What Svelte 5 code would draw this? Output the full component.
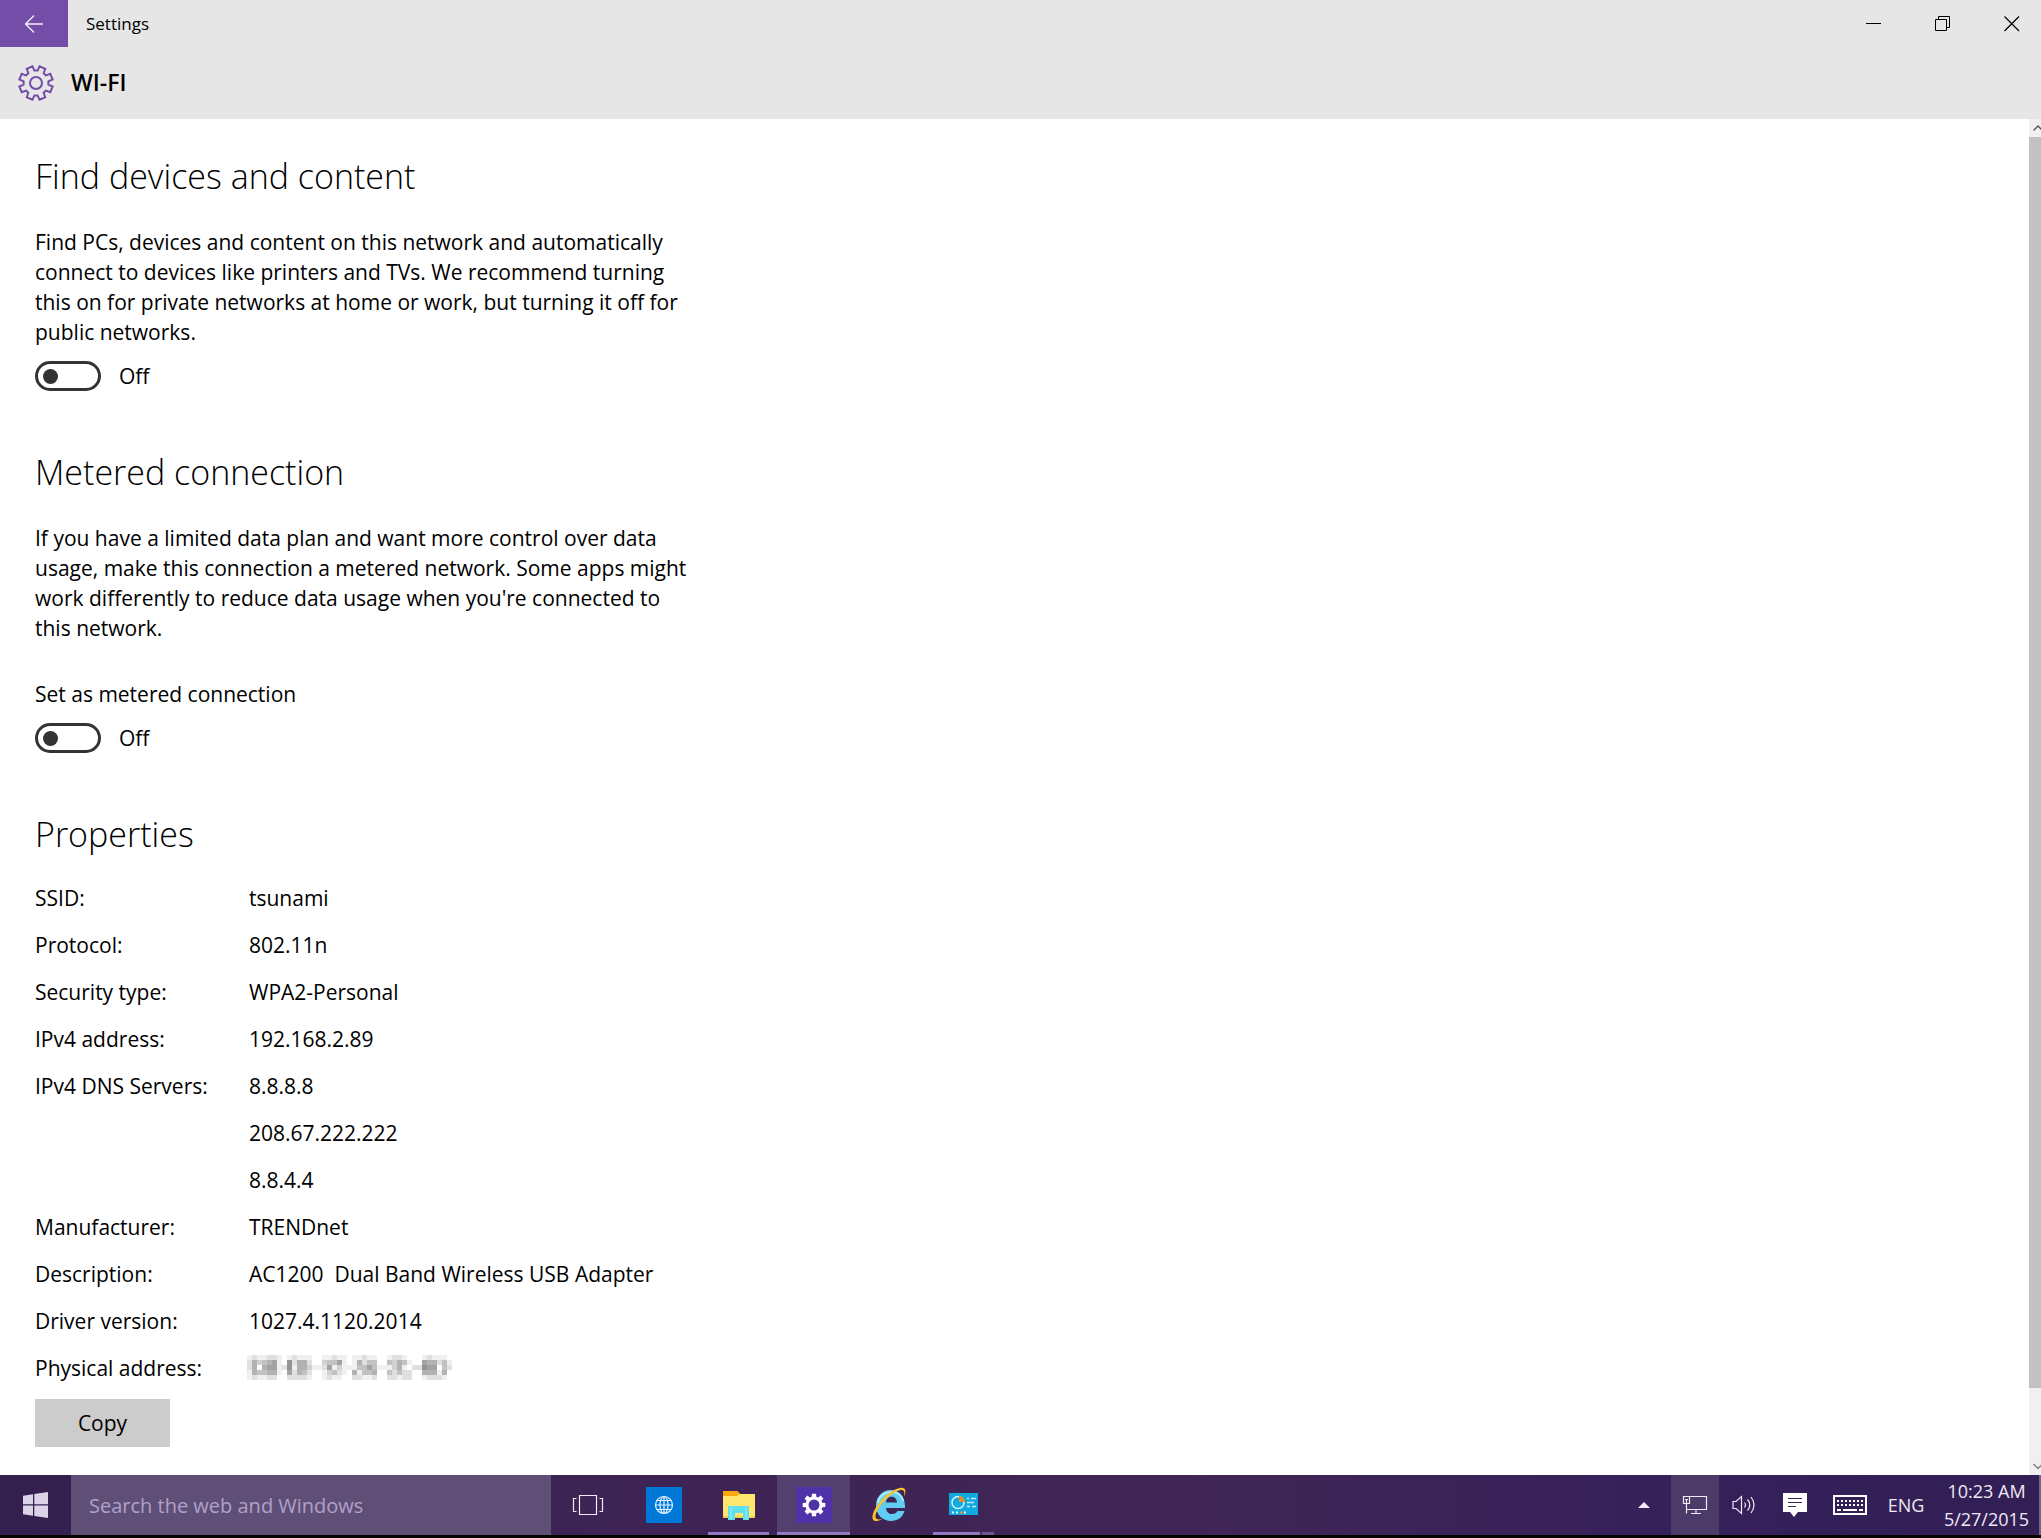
<script>
  let discoverable = $state(false);
  let metered = $state(false);
  let query = $state('');

  const properties = [
    ['SSID:', 'tsunami'],
    ['Protocol:', '802.11n'],
    ['Security type:', 'WPA2-Personal'],
    ['IPv4 address:', '192.168.2.89'],
    ['IPv4 DNS Servers:', '8.8.8.8'],
    ['', '208.67.222.222'],
    ['', '8.8.4.4'],
    ['Manufacturer:', 'TRENDnet'],
    ['Description:', 'AC1200\u00a0 Dual Band Wireless USB Adapter'],
    ['Driver version:', '1027.4.1120.2014']
  ];

  // Pixelated physical address: one digit per cell, 0 = clear, 9 = darkest.
  const mosaic = [
    '12112210121110011211011211001221000121110',
    '25345610725520034461015244004354100655241',
    '25056612715531126131114464111351022766042',
    '15445510625420013421051445004242200555150',
    '12112200222210012110022112002212200122210'
  ];
  const cells = mosaic.flatMap((row, y) =>
    [...row].map((v, x) => ({ x, y, v: Number(v) }))
  ).filter((c) => c.v > 0);

  function gear(cx, cy, outer, inner, teeth, start) {
    const step = (Math.PI * 2) / teeth;
    const pts = [];
    for (let i = 0; i < teeth; i++) {
      const a = start + i * step;
      for (const [r, o] of [[inner, -0.34], [outer, -0.23], [outer, 0.23], [inner, 0.34]]) {
        pts.push(`${(cx + r * Math.cos(a + o * step)).toFixed(2)} ${(cy + r * Math.sin(a + o * step)).toFixed(2)}`);
      }
    }
    return `M${pts.join('L')}Z`;
  }
  const headerGear = gear(18, 18, 17, 12.5, 8, Math.PI / 8);
  const tileGear = gear(18, 18, 11.5, 8.6, 8, 0);
</script>

<div class="window">
  <header>
    <div class="titlebar">
      <button class="back" aria-label="Back">
        <svg width="20" height="20" viewBox="0 0 20 20"><path d="M19 10H1.500M10 1.500L1.500 10L10 18.500" fill="none" stroke="#f4eefb" stroke-width="1.300" /></svg>
      </button>
      <span class="app-name">Settings</span>
      <div class="controls">
        <button aria-label="Minimize">
          <svg width="16" height="16" viewBox="0 0 16 16"><path d="M0 7.500H15" stroke="#000" /></svg>
        </button>
        <button aria-label="Restore">
          <svg width="16" height="16" viewBox="0 0 16 16"><path d="M.5 3.500H11.500V14.500H.5ZM3.500 3.500V.5H14.500V11.500H11.500" fill="none" stroke="#000" /></svg>
        </button>
        <button aria-label="Close">
          <svg width="16" height="16" viewBox="0 0 16 16"><path d="M.5.5L15 15M15 .5L.5 15" stroke="#000" stroke-width="1.200" /></svg>
        </button>
      </div>
    </div>
    <div class="page-title">
      <svg width="36" height="36" viewBox="0 0 36 36" fill="none" stroke="#744da9" stroke-width="2">
        <path d={headerGear} />
        <circle cx="18" cy="18" r="6" />
      </svg>
      <h1>WI-FI</h1>
    </div>
  </header>

  <div class="body">
    <main>
      <section>
        <h2>Find devices and content</h2>
        <p>
          Find PCs, devices and content on this network and automatically<br />
          connect to devices like printers and TVs. We recommend turning<br />
          this on for private networks at home or work, but turning it off for<br />
          public networks.
        </p>
        <label class="toggle">
          <input type="checkbox" role="switch" aria-label="Find devices and content" bind:checked={discoverable} />
          <span>{discoverable ? 'On' : 'Off'}</span>
        </label>
      </section>

      <section>
        <h2>Metered connection</h2>
        <p>
          If you have a limited data plan and want more control over data<br />
          usage, make this connection a metered network. Some apps might<br />
          work differently to reduce data usage when you're connected to<br />
          this network.
        </p>
        <label class="caption" for="metered">Set as metered connection</label>
        <div class="toggle">
          <input id="metered" type="checkbox" role="switch" bind:checked={metered} />
          <span>{metered ? 'On' : 'Off'}</span>
        </div>
      </section>

      <section>
        <h2>Properties</h2>
        <table>
          <tbody>
            {#each properties as [name, value]}
              <tr><th scope="row">{name}</th><td>{value}</td></tr>
            {/each}
            <tr>
              <th scope="row">Physical address:</th>
              <td>
                <svg class="mosaic" width="205" height="25" viewBox="0 0 41 5" shape-rendering="crispEdges" role="img" aria-label="Hidden">
                  {#each cells as c}
                    <rect x={c.x} y={c.y} width="1" height="1" fill="#000" fill-opacity={c.v * 0.06} />
                  {/each}
                </svg>
              </td>
            </tr>
          </tbody>
        </table>
        <button class="copy">Copy</button>
      </section>
    </main>

    <div class="scrollbar">
      <button aria-label="Scroll up"><svg width="12" height="18" viewBox="0 0 12 18"><path d="M4.500 11.500L9 7L13.500 11.500" fill="none" stroke="#505050" stroke-width="1.300" /></svg></button>
      <div class="track"><div class="thumb"></div><div class="rest"></div></div>
      <button aria-label="Scroll down"><svg width="12" height="18" viewBox="0 0 12 18"><path d="M4.500 7L9 11.500L13.500 7" fill="none" stroke="#808080" stroke-width="1.500" /></svg></button>
    </div>
  </div>

  <footer>
    <button class="start" aria-label="Start">
      <svg width="25" height="26" viewBox="0 0 25 26" fill="#ddd3e8"><path d="M0 3.700L10 2.200V12.300H0ZM11.300 2L25 0V12.300H11.300ZM0 13.500H10V23.700L0 22.200ZM11.300 13.500H25V26L11.300 23.900Z" /></svg>
    </button>
    <input class="search" type="text" placeholder="Search the web and Windows" aria-label="Search the web and Windows" bind:value={query} />
    <nav>
      <button aria-label="Task view">
        <svg width="36" height="36" viewBox="0 0 36 36" fill="none" stroke="#f0eaf4" stroke-width="1.200"><path d="M8.500 8.500H25.500V27.500H8.500ZM5.500 11.500H2.500V24.500H5.500M28.500 11.500H31.500V24.500H28.500" /></svg>
      </button>
      <button aria-label="Browser">
        <svg width="36" height="36" viewBox="0 0 36 36" fill="none" stroke="#e4f2ff" stroke-width="1.200"><path d="M0 0H36V36H0Z" fill="#0078d7" stroke="none" /><circle cx="18" cy="18" r="8.500" /><ellipse cx="18" cy="18" rx="4" ry="8.500" /><path d="M18 9.500V26.500M9.500 18H26.500M11 13.500H25M11 22.500H25" /></svg>
      </button>
      <button class="running" aria-label="File Explorer">
        <svg width="36" height="36" viewBox="0 0 36 36"><path d="M2 4H16L19 7H34V31H2Z" fill="#ffe66e" /><path d="M2 4H16L19 6.500L16 9H2Z" fill="#f8a80c" /><path d="M2 29H34V31H2Z" fill="#f7cf4c" /><path d="M7 19H28V33H22V26H14V33H7Z" fill="#5fe0ee" /><path d="M10 20V32M25 20V32" stroke="#9af3f5" /></svg>
      </button>
      <button class="running active" aria-label="Settings">
        <svg width="36" height="36" viewBox="0 0 36 36"><path d="M0 0H36V36H0Z" fill="#4f32a8" /><path d={tileGear} fill="#fff" /><circle cx="18" cy="18" r="5.500" fill="#4f32a8" /></svg>
      </button>
      <button aria-label="Internet Explorer">
        <svg width="36" height="36" viewBox="0 0 36 36">
          <path d="M19.500 3C28.500 3 34.500 10 34 21H15C15.500 25 18 27 21 27C24 27 25.500 26 26.500 24H33.500C31.500 30.500 26.500 34 20 34C11.500 34 5 27.500 5 18.500C5 9.500 11.500 3 19.500 3ZM15 15.500H26C25.500 11.500 23.500 9.800 20.500 9.800C17.500 9.800 15.500 11.500 15 15.500Z" fill="#62cdf2" fill-rule="evenodd" />
          <path d="M7 16C8 9 14 5 21 5C27 5 31 9 32 14" fill="none" stroke="#a8ebfb" stroke-width="2" />
          <path d="M33 10C36 3 34 0 29 1C18 3 5 17 2 27C0 34 4 36 11 32C5 33.500 3.500 31 5 26.500C8 18 19 6 28 3.500C33 2 34 4 33 10Z" fill="#f9c32c" />
        </svg>
      </button>
      <button class="grouped" aria-label="Control Panel">
        <svg width="36" height="36" viewBox="0 0 36 36"><path d="M3 6H32V28H3Z" fill="#12a9df" /><circle cx="12" cy="15.500" r="6" fill="#12a9df" stroke="#d5f4ff" stroke-width="1.500" /><path d="M13 15V9A6 6 0 0 1 19 15Z" fill="#e88b22" /><path d="M21 11.500H23M25 11.500H30M21 15.500H28M21 19.500H24M26 19.500H30" stroke="#bcecff" stroke-width="1.500" /><path d="M6 25.500H8M10 25.500H12M18 25.500H20" stroke="#e5f9ff" stroke-width="2" /><path d="M14 25.500H17" stroke="#df9644" stroke-width="2" /></svg>
      </button>
    </nav>
    <div class="tray">
      <button class="caret" aria-label="Show hidden icons"><svg width="12" height="8" viewBox="0 0 12 8"><path d="M0 7L6 1L12 7Z" fill="#f0eaf4" /></svg></button>
      <button class="network" aria-label="Network">
        <svg width="26" height="20" viewBox="0 0 26 20" fill="none" stroke="#f0eaf4" stroke-width="1.200"><path d="M8 1.500H24.500V14.500H5M1.500 1.500H7.500V8.500H1.500ZM3 4.500H6M4.500 4.500V18.500M14 14.500V18M9 18.500H19" /></svg>
      </button>
      <button class="volume" aria-label="Volume">
        <svg width="24" height="20" viewBox="0 0 24 20" fill="none" stroke="#f0eaf4" stroke-width="1.200"><path d="M1 6.500H4L9.500 1.500V18.500L4 13.500H1ZM12.500 7.500Q14.500 10 12.500 12.500M15.500 4.500Q20 10 15.500 15.500M19 2Q25 10 19 18" /></svg>
      </button>
      <button class="actions" aria-label="Notifications">
        <svg width="24" height="24" viewBox="0 0 24 24"><path d="M0 0H24V19H15L11 24L7 19H0Z" fill="#fff" /><path d="M5 5.500H19M5 9.500H19M5 13.500H13" stroke="#38205a" stroke-width="1.200" /></svg>
      </button>
      <button class="keyboard" aria-label="Touch keyboard">
        <svg width="34" height="20" viewBox="0 0 34 20" fill="none" stroke="#fff"><path d="M1 1H33V19H1Z" stroke-width="2" /><path d="M4 6H30M4 10H30" stroke-width="2" stroke-dasharray="2 2" /><path d="M4 15H8M10 15H24M26 15H30" stroke-width="2" /></svg>
      </button>
      <button class="language">ENG</button>
      <button class="clock"><span>10:23 AM</span><span>5/27/2015</span></button>
      <button class="peek" aria-label="Show desktop"></button>
    </div>
  </footer>
</div>

<style>
  :global(body) {
    margin: 0;
    background: #fff;
  }
  .window {
    display: flex;
    flex-direction: column;
    min-height: 100vh;
    font-family: 'Segoe UI', 'Open Sans', 'Noto Sans', sans-serif;
    font-size: 21px;
    line-height: 30px;
    color: #000;
  }
  button {
    margin: 0;
    padding: 0;
    border: 0;
    background: none;
    font: inherit;
    color: inherit;
  }
  svg {
    display: block;
    flex: none;
  }
  header {
    height: 119px;
    overflow: hidden;
    background: #e6e6e6;
  }
  .titlebar {
    display: flex;
    height: 47px;
    align-items: center;
  }
  .back {
    display: grid;
    place-items: center;
    width: 68px;
    height: 47px;
    background: #744da9;
  }
  .app-name {
    margin-left: 18px;
    font-size: 17px;
  }
  .controls {
    display: flex;
    margin: 0 -5px 0 auto;
  }
  .controls button {
    display: grid;
    place-items: center;
    width: 69px;
    height: 47px;
  }
  .page-title {
    display: flex;
    align-items: center;
    gap: 17px;
    height: 72px;
    padding-left: 18px;
  }
  h1 {
    margin: 0 0 2px;
    font-size: 23px;
    font-weight: 600;
  }
  .body {
    display: flex;
    flex: 1;
  }
  main {
    flex: 1;
    padding: 33px 35px 27px;
  }
  section {
    margin-bottom: 57px;
  }
  section:last-child {
    margin-bottom: 0;
  }
  h2 {
    margin: 0 0 27px;
    font-size: 34px;
    line-height: 48px;
    font-weight: 300;
  }
  section:last-child h2 {
    margin-bottom: 16px;
  }
  p {
    margin: 0;
  }
  .toggle {
    display: flex;
    align-items: center;
    gap: 18px;
    width: max-content;
    margin-top: 14px;
  }
  .toggle input {
    appearance: none;
    display: flex;
    align-items: center;
    box-sizing: border-box;
    width: 66px;
    height: 30px;
    margin: 0;
    padding: 0 5px;
    border: 3px solid #333;
    border-radius: 15px;
  }
  .toggle input::before {
    content: '';
    width: 15px;
    height: 15px;
    border-radius: 50%;
    background: #333;
  }
  .toggle input:checked {
    justify-content: flex-end;
  }
  .caption {
    display: block;
    margin-top: 36px;
  }
  table {
    border-collapse: collapse;
  }
  tr {
    height: 47px;
  }
  th {
    width: 214px;
    padding: 0;
    text-align: left;
    font-weight: 400;
  }
  td {
    padding: 0;
  }
  .mosaic {
    margin-left: -2px;
  }
  .copy {
    display: block;
    width: 135px;
    height: 48px;
    margin-top: 8px;
    background: #ccc;
  }
  .scrollbar {
    display: flex;
    flex-direction: column;
    width: 12px;
    background: #f0f0f0;
  }
  .scrollbar button {
    height: 18px;
    overflow: hidden;
  }
  .track {
    display: flex;
    flex: 1;
    flex-direction: column;
  }
  .thumb {
    flex: 18;
    background: #c2c2c2;
  }
  .rest {
    flex: 1;
  }
  footer {
    display: flex;
    height: 60px;
    border-bottom: 3px solid #000;
    background: linear-gradient(90deg, #33204f 0, #3d2454 30%, #3f2656 60%, #35205a 85%, #321f54 100%);
    color: #f0eaf4;
  }
  .start {
    display: grid;
    place-items: center;
    width: 71px;
  }
  .search {
    box-sizing: border-box;
    width: 480px;
    padding: 2px 18px 0;
    border: 0;
    border-radius: 0;
    background: #5f4f76;
    font: inherit;
    font-size: 20px;
    color: #fff;
  }
  .search::placeholder {
    color: #b0a0cb;
    opacity: 1;
  }
  nav {
    display: flex;
    gap: 2px;
    margin-left: 1px;
  }
  nav button {
    position: relative;
    display: grid;
    place-items: center;
    width: 73px;
  }
  .active {
    background: #54406f;
  }
  .running::after,
  .grouped::after {
    content: '';
    position: absolute;
    bottom: 0;
    left: 6px;
    right: 6px;
    height: 3px;
    background: #9477c4;
  }
  .active::after {
    left: 0;
    right: 0;
  }
  .grouped::after {
    background: linear-gradient(90deg, #9477c4 47px, #49305f 47px, #49305f 49px, #6d558d 49px);
  }
  .tray {
    display: flex;
    margin-left: auto;
  }
  .tray button {
    display: grid;
    place-items: center;
  }
  .caret {
    width: 54px;
  }
  .network {
    width: 48px;
    background: #4c3a68;
  }
  .volume {
    width: 50px;
  }
  .actions {
    width: 52px;
  }
  .keyboard {
    width: 57px;
  }
  .tray .language {
    width: 56px;
    font-size: 18px;
  }
  .tray .clock {
    width: 105px;
    align-content: center;
    font-size: 18px;
    line-height: 28px;
  }
  .tray .peek {
    width: 2px;
    background: #746488;
  }
</style>
